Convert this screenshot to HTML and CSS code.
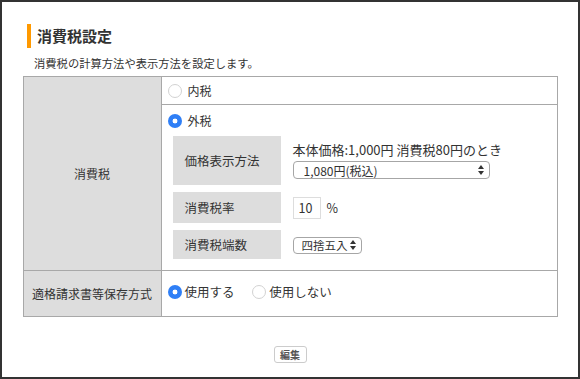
FILE: index.html
```html
<!DOCTYPE html>
<html lang="ja">
<head>
  <meta charset="UTF-8">
  <meta name="viewport" content="width=device-width, initial-scale=1.0">
  <title>消費税設定</title>
  <link rel="stylesheet" href="styles.css">
</head>
<body>
  <div class="frame">
    <h1 class="title">消費税設定</h1>
    <p class="lead">消費税の計算方法や表示方法を設定します。</p>

    <table class="form">
      <tr>
        <th>消費税</th>
        <td class="tax-cell">
          <div class="opt opt-first">
            <label class="radio"><input type="radio" name="tax"><span>内税</span></label>
          </div>
          <div class="opt">
            <label class="radio"><input type="radio" name="tax" checked><span>外税</span></label>
            <div class="sub">
              <div class="sub-label">価格表示方法</div>
              <div class="sub-val stack">
                <span>本体価格:1,000円 消費税80円のとき</span>
                <label class="select wide">
                  <select><option>1,080円(税込)</option></select>
                  <svg class="updown" viewBox="0 0 6 10" width="6" height="10"><path d="M3 0 L6 4 L0 4 Z M3 10 L6 6 L0 6 Z" fill="#333"/></svg>
                </label>
              </div>
              <div class="sub-label">消費税率</div>
              <div class="sub-val">
                <input class="num" type="text" value="10"><span class="unit">%</span>
              </div>
              <div class="sub-label">消費税端数</div>
              <div class="sub-val">
                <label class="select">
                  <select><option>四捨五入</option></select>
                  <svg class="updown" viewBox="0 0 6 10" width="6" height="10"><path d="M3 0 L6 4 L0 4 Z M3 10 L6 6 L0 6 Z" fill="#333"/></svg>
                </label>
              </div>
            </div>
          </div>
        </td>
      </tr>
      <tr>
        <th>適格請求書等保存方式</th>
        <td class="inv-cell">
          <label class="radio"><input type="radio" name="inv" checked><span>使用する</span></label>
          <label class="radio"><input type="radio" name="inv"><span>使用しない</span></label>
        </td>
      </tr>
    </table>

    <div class="actions">
      <button class="btn" type="button">編集</button>
    </div>
  </div>
</body>
</html>
```

FILE: styles.css
```css
* {
  margin: 0;
  padding: 0;
  box-sizing: border-box;
}
body {
  font-family: "Noto Sans CJK JP", sans-serif;
  color: #333;
  background: #fff;
}
.frame {
  width: 580px;
  height: 379px;
  border: 2px solid #333;
  padding: 22px 0 0;
}
.title {
  margin-left: 25px;
  height: 24px;
  line-height: 24px;
  border-left: 4px solid #f90;
  padding-left: 6px;
  font-size: 15px;
  font-weight: bold;
}
.lead {
  margin: 6px 0 0 32px;
  font-size: 11.3px;
  line-height: 18px;
}
.form {
  width: 535px;
  margin: 4px auto 0;
  border-collapse: collapse;
  font-size: 12px;
}
.form th,
.form td {
  border: 1px solid #a8a8a8;
}
.form th {
  width: 138px;
  background: #ddd;
  font-weight: normal;
  text-align: center;
  vertical-align: middle;
}
.tax-cell {
  padding: 0;
}
.opt {
  padding: 8px 0 11px 6px;
}
.opt-first {
  height: 28px;
  padding: 1px 0 0 6px;
  display: flex;
  align-items: center;
  border-bottom: 1px solid #a8a8a8;
}
.radio {
  display: inline-flex;
  align-items: center;
  gap: 6px;
  line-height: 16px;
}
.radio input {
  appearance: none;
  -webkit-appearance: none;
  width: 14px;
  height: 14px;
  border-radius: 50%;
  border: 1px solid #d2d2d2;
  background: #fff;
  margin: 0;
}
.radio input:checked {
  border: none;
  background: radial-gradient(circle, #fff 0 2.2px, #2f7ff6 2.7px);
}
.sub {
  display: grid;
  grid-template-columns: 108px 1fr;
  grid-template-rows: 49px 31px 29px;
  column-gap: 12px;
  row-gap: 7px;
  margin: 5px 0 0 5px;
}
.sub-label {
  background: #ddd;
  padding: 0 12px;
  display: flex;
  align-items: center;
  font-size: 12.5px;
}
.sub-val {
  display: flex;
  align-items: center;
}
.stack {
  flex-direction: column;
  align-items: flex-start;
  justify-content: center;
  gap: 3px;
  line-height: 16px;
  font-size: 13px;
}
.select {
  position: relative;
  display: inline-block;
}
.select select {
  appearance: none;
  -webkit-appearance: none;
  width: 69px;
  height: 17px;
  border: 1px solid #a6a6a6;
  border-radius: 4px;
  background: #fff;
  padding: 0 0 0 8px;
  font-family: inherit;
  font-size: 11.5px;
  line-height: 15px;
  color: #333;
}
.select.wide select {
  width: 197px;
  height: 18px;
  padding-left: 10px;
  font-size: 12px;
}
.updown {
  position: absolute;
  right: 6px;
  top: 50%;
  margin-top: -5px;
}
.num {
  width: 28px;
  height: 22px;
  border: 1px solid #ddd;
  padding: 0 0 0 5px;
  font-family: inherit;
  font-size: 12.5px;
  color: #333;
}
.unit {
  margin-left: 6px;
  font-size: 12.5px;
}
.inv-cell {
  height: 46px;
  padding: 0 0 0 6px;
  font-size: 12.5px;
}
.inv-cell .radio {
  gap: 3px;
}
.inv-cell .radio + .radio {
  margin-left: 15px;
}
.actions {
  margin-top: 23px;
  text-align: center;
}
.btn {
  width: 33px;
  height: 17px;
  border: 1px solid #ccc;
  border-radius: 3px;
  background: #fff;
  font-family: inherit;
  font-size: 10px;
  font-weight: bold;
  color: #555;
  line-height: 15px;
}
```
